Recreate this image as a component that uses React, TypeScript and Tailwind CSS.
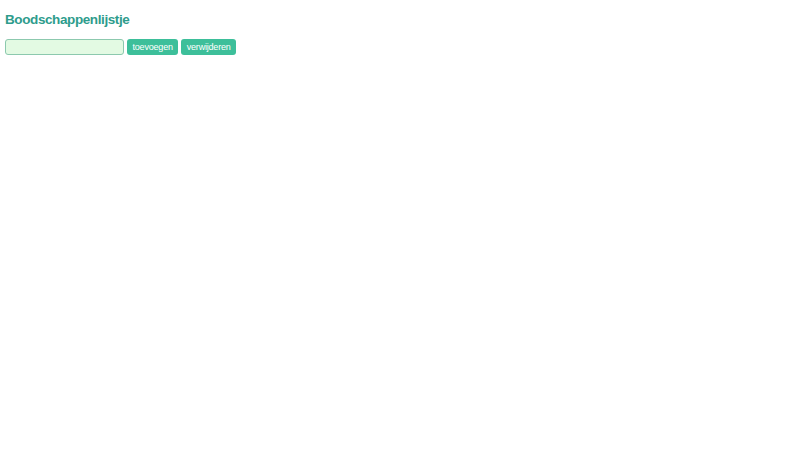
export default function App() {
  return (
    <div className="min-h-screen bg-white p-[5px] font-['Liberation_Sans',Arial,sans-serif]">
      <h1 className="mt-[7px] text-[13.5px] font-bold leading-[16px] tracking-[-0.4px] text-[#2e9c8c]">Boodschappenlijstje</h1>
      <div className="mt-[11px] flex items-center gap-[3px]">
        <input
          type="text"
          className="h-[16px] w-[119px] rounded-[3px] border border-[#8cc9ae] bg-[#e3fae3] px-1 text-[9px] outline-none"
        />
        <button className="h-[16px] rounded-[3px] bg-[#3dbf9a] px-[5.5px] text-[9px] leading-[16px] tracking-[-0.2px] text-white">
          toevoegen
        </button>
        <button className="h-[16px] rounded-[3px] bg-[#3dbf9a] px-[5.5px] text-[9px] leading-[16px] tracking-[-0.2px] text-white">
          verwijderen
        </button>
      </div>
    </div>
  );
}
